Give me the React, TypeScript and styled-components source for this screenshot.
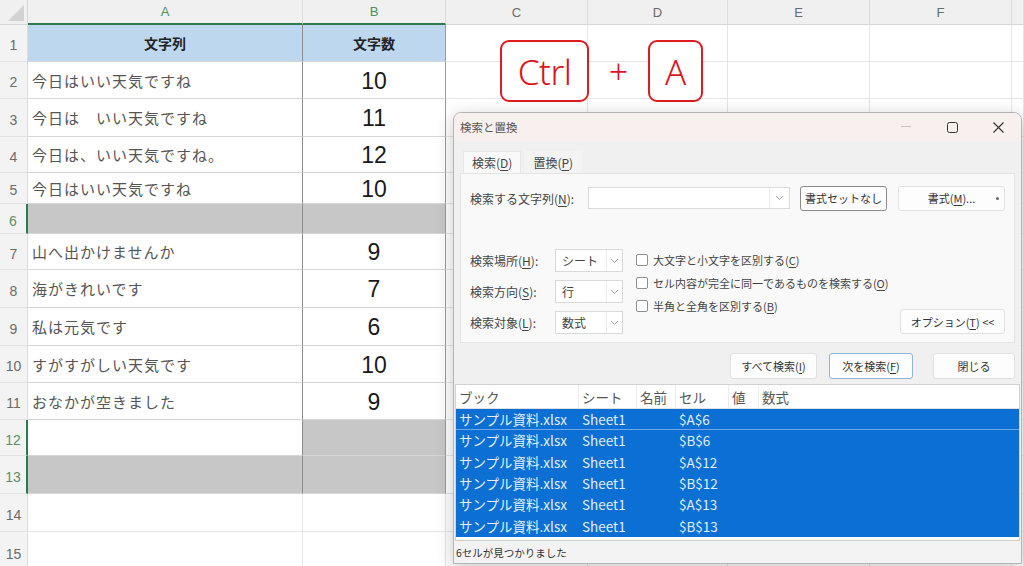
import React from "react";
import styled, { createGlobalStyle, css } from "styled-components";

const GlobalStyle = createGlobalStyle`
  html, body { margin: 0; padding: 0; background: #fff; }
  body {
    font-family: "Noto Sans CJK JP", "Noto Sans", sans-serif;
    overflow: hidden;
  }
  * { box-sizing: border-box; }
`;

const JP = `"Noto Sans CJK JP", "Noto Sans", sans-serif`;
const GREEN = "#2f7a4c";
const SEL_GREY = "#c7c7c7";

const Page = styled.div`
  position: relative;
  width: 1024px;
  height: 566px;
  overflow: hidden;
  background: #fff;
`;

/* ---------- spreadsheet ---------- */

const Sheet = styled.div`
  display: grid;
  grid-template-columns: 28px 275px 143px 142px 140px 142px 142px 12px;
  grid-template-rows: 25px 37px 37px 38px 36px 31px 30px 36px 38px 38px 37px 37px 36px 38px 38px 40px;
`;

const Corner = styled.div`
  position: relative;
  background: #f0f0f0;
  border-right: 1px solid #d6d6d6;
  border-bottom: 1px solid #d6d6d6;
  &::after {
    content: "";
    position: absolute;
    right: 3px;
    bottom: 3px;
    width: 16px;
    height: 16px;
    background: #d2d2d2;
    clip-path: polygon(100% 0, 100% 100%, 0 100%);
  }
`;

const ColHead = styled.div<{ $selected?: boolean }>`
  display: flex;
  align-items: center;
  justify-content: center;
  background: #f0f0f0;
  border-right: 1px solid #dcdcdc;
  border-bottom: ${(p) => (p.$selected ? `2px solid ${GREEN}` : "1px solid #d6d6d6")};
  font-family: "Liberation Sans", Arial, sans-serif;
  font-size: 13px;
  color: ${(p) => (p.$selected ? "#4f8c64" : "#6a6a6a")};
`;

const RowHead = styled.div<{ $selected?: boolean }>`
  display: flex;
  align-items: center;
  justify-content: center;
  padding-top: 4px;
  background: #f3f3f3;
  border-right: ${(p) => (p.$selected ? `2px solid ${GREEN}` : "1px solid #dcdcdc")};
  border-bottom: 1px solid #e2e2e2;
  font-family: "Liberation Sans", Arial, sans-serif;
  font-size: 14px;
  color: ${(p) => (p.$selected ? "#5b8e6c" : "#6b6b6b")};
`;

type CellKind = "head" | "text" | "num" | "blank";

const Cell = styled.div<{
  $kind: CellKind;
  $bg?: string;
  $right?: string;
  $bottom?: string;
}>`
  display: flex;
  align-items: center;
  overflow: hidden;
  white-space: nowrap;
  background: ${(p) => p.$bg || "#fff"};
  border-right: 1px solid ${(p) => p.$right || "#e6e6e6"};
  border-bottom: 1px solid ${(p) => p.$bottom || "#e6e6e6"};
  ${(p) =>
    p.$kind === "head" &&
    css`
      justify-content: center;
      font-family: ${JP};
      font-weight: 700;
      font-size: 14px;
      color: #222;
    `}
  ${(p) =>
    p.$kind === "text" &&
    css`
      padding-left: 4px;
      font-family: ${JP};
      font-size: 15px;
      letter-spacing: 1px;
      color: #555;
    `}
  ${(p) =>
    p.$kind === "num" &&
    css`
      justify-content: center;
      padding-top: 2px;
      font-family: "Liberation Sans", Arial, sans-serif;
      font-size: 23px;
      color: #1a1a1a;
    `}
`;

type SheetRow = {
  n: number;
  a?: string;
  b?: string;
  head?: boolean;
  selA?: boolean;
  selB?: boolean;
  rowSel?: boolean;
  outside?: boolean;
};

const sheetRows: SheetRow[] = [
  { n: 1, a: "文字列", b: "文字数", head: true },
  { n: 2, a: "今日はいい天気ですね", b: "10" },
  { n: 3, a: "今日は　いい天気ですね", b: "11" },
  { n: 4, a: "今日は、いい天気ですね。", b: "12" },
  { n: 5, a: "今日はいい天気ですね", b: "10" },
  { n: 6, selA: true, selB: true, rowSel: true },
  { n: 7, a: "山へ出かけませんか", b: "9" },
  { n: 8, a: "海がきれいです", b: "7" },
  { n: 9, a: "私は元気です", b: "6" },
  { n: 10, a: "すがすがしい天気です", b: "10" },
  { n: 11, a: "おなかが空きました", b: "9" },
  { n: 12, selB: true, rowSel: true },
  { n: 13, selA: true, selB: true, rowSel: true },
  { n: 14, outside: true },
  { n: 15, outside: true },
];

const columns = ["A", "B", "C", "D", "E", "F", ""];

function SheetView() {
  return (
    <Sheet>
      <Corner />
      {columns.map((c, i) => (
        <ColHead key={i} $selected={i < 2}>
          {c}
        </ColHead>
      ))}
      {sheetRows.map((r) => {
        const tableBottom = r.outside ? "#e6e6e6" : "#d6d6d6";
        const aBg = r.head ? "#bdd7ee" : r.selA ? SEL_GREY : "#fff";
        const bBg = r.head ? "#bdd7ee" : r.selB ? SEL_GREY : "#fff";
        return (
          <React.Fragment key={r.n}>
            <RowHead $selected={r.rowSel}>{r.n}</RowHead>
            <Cell
              $kind={r.head ? "head" : r.a ? "text" : "blank"}
              $bg={aBg}
              $right={r.outside ? "#e6e6e6" : "#8c8c8c"}
              $bottom={tableBottom}
            >
              {r.a}
            </Cell>
            <Cell
              $kind={r.head ? "head" : r.b ? "num" : "blank"}
              $bg={bBg}
              $right={r.outside ? "#e6e6e6" : "#9a9a9a"}
              $bottom={tableBottom}
            >
              {r.b}
            </Cell>
            {[0, 1, 2, 3, 4].map((k) => (
              <Cell key={k} $kind="blank" />
            ))}
          </React.Fragment>
        );
      })}
    </Sheet>
  );
}

/* ---------- shortcut keys ---------- */

const Keys = styled.div`
  position: absolute;
  left: 500px;
  top: 40px;
  display: flex;
  align-items: center;
`;

const Key = styled.div<{ $w: number }>`
  width: ${(p) => p.$w}px;
  height: 62px;
  display: flex;
  align-items: center;
  justify-content: center;
  background: #fff;
  border: 2px solid #dd1c22;
  border-radius: 9px;
  font-family: "Noto Sans", "Liberation Sans", sans-serif;
  font-weight: 300;
  font-size: 35px;
  letter-spacing: -0.5px;
  color: #d9161d;
`;

const Plus = styled.div`
  width: 59px;
  text-align: center;
  font-family: "Noto Sans", sans-serif;
  font-weight: 300;
  font-size: 34px;
  color: #d9161d;
`;

/* ---------- dialog ---------- */

const Dialog = styled.div`
  position: absolute;
  left: 453px;
  top: 112px;
  width: 569px;
  height: 452px;
  display: flex;
  flex-direction: column;
  background: #f0f0f0;
  border: 1px solid #b4b4b4;
  border-radius: 8px 8px 0 0;
  box-shadow: 0 4px 18px rgba(0, 0, 0, 0.22);
  overflow: hidden;
  font-family: ${JP};
  color: #333;
`;

const TitleBar = styled.div`
  height: 28px;
  flex: none;
  display: flex;
  align-items: center;
  padding-left: 6px;
  background: #f8f0ee;
  font-size: 11.5px;
  color: #555;
`;

const TitleControls = styled.div`
  margin-left: auto;
  display: flex;
  height: 100%;
`;

const TitleButton = styled.div`
  width: 46px;
  height: 100%;
  display: flex;
  align-items: center;
  justify-content: center;
`;

const Section = styled.div`
  padding: 10px 6px 0;
  flex: none;
`;

const Tabs = styled.div`
  display: flex;
  gap: 3px;
  margin-left: 3px;
`;

const Tab = styled.div<{ $active?: boolean }>`
  height: 22px;
  padding: 0 8px;
  display: flex;
  align-items: center;
  font-size: 12px;
  color: #444;
  background: ${(p) => (p.$active ? "#f9f9f9" : "#f3f3f3")};
  border: 1px solid ${(p) => (p.$active ? "#e6e6e6" : "transparent")};
  border-bottom: none;
`;

const Panel = styled.div`
  height: 170px;
  padding: 12px 9px 9px 9px;
  background: #f9f9f9;
  border: 1px solid #e4e4e4;
`;

const FindRow = styled.div`
  display: flex;
  align-items: center;
  height: 24px;
`;

const Label = styled.div<{ $w: number }>`
  width: ${(p) => p.$w}px;
  flex: none;
  font-size: 12px;
  color: #444;
  white-space: nowrap;
`;

const Combo = styled.div<{ $w: number; $h: number }>`
  width: ${(p) => p.$w}px;
  height: ${(p) => p.$h}px;
  flex: none;
  display: flex;
  align-items: center;
  background: #fff;
  border: 1px solid #d9d9d9;
  font-size: 12px;
  color: #444;
`;

const ComboText = styled.div`
  flex: 1;
  padding-left: 6px;
`;

const ComboArrow = styled.div<{ $w: number }>`
  width: ${(p) => p.$w}px;
  height: 100%;
  display: flex;
  align-items: center;
  justify-content: center;
  border-left: 1px solid #ececec;
`;

const Button = styled.div<{ $w: number; $h?: number; $tone?: "strong" | "focus" }>`
  width: ${(p) => p.$w}px;
  height: ${(p) => p.$h || 25}px;
  flex: none;
  position: relative;
  display: flex;
  align-items: center;
  justify-content: center;
  background: #fdfdfd;
  border: 1px solid
    ${(p) => (p.$tone === "strong" ? "#8a8a8a" : p.$tone === "focus" ? "#8fb4dc" : "#e1e1e1")};
  border-radius: 3px;
  font-size: 11px;
  color: #333;
  white-space: nowrap;
`;

const Mnemonic = styled.span`
  text-decoration: underline;
  text-underline-offset: 2px;
`;

const MenuDot = styled.span`
  position: absolute;
  right: 5px;
  top: 10px;
  width: 3px;
  height: 3px;
  background: #666;
  border-radius: 50%;
`;

const Options = styled.div`
  display: flex;
  align-items: flex-start;
  margin-top: 39px;
`;

const SelectGrid = styled.div`
  display: grid;
  grid-template-columns: 85px 68px;
  row-gap: 8px;
  align-items: center;
`;

const CheckList = styled.div`
  display: flex;
  flex-direction: column;
  gap: 8px;
  margin-left: 13px;
  padding-top: 3px;
`;

const CheckRow = styled.div`
  display: flex;
  align-items: center;
  gap: 5px;
  height: 15px;
  font-size: 11px;
  color: #444;
  white-space: nowrap;
`;

const CheckBox = styled.span`
  width: 12px;
  height: 12px;
  background: #fff;
  border: 1px solid #8f8f8f;
  border-radius: 2px;
`;

const OptionSlot = styled.div`
  margin-left: auto;
  align-self: flex-end;
`;

const ButtonRow = styled.div`
  display: flex;
  justify-content: flex-end;
  gap: 12px;
  margin-top: 10px;
  padding-right: 6px;
  flex: none;
`;

const Spacer = styled.div`
  width: 8px;
`;

const ResultList = styled.div`
  margin: 5px 1px 0;
  height: 157px;
  flex: none;
  display: flex;
  flex-direction: column;
  background: #fff;
  border: 1px solid #d2d2d2;
`;

const ListGrid = css`
  display: grid;
  grid-template-columns: 123px 58px 39px 53px 30px 1fr;
  align-items: center;
`;

const ListHeader = styled.div`
  ${ListGrid};
  height: 24px;
  font-size: 13.5px;
  color: #555;
  border-bottom: 1px solid #e0e0e0;
`;

const HeadCell = styled.div`
  height: 100%;
  display: flex;
  align-items: center;
  padding-left: 3px;
  border-right: 1px solid #ececec;
  &:last-child {
    border-right: none;
  }
`;

const ListRow = styled.div<{ $focus?: boolean }>`
  ${ListGrid};
  height: 21.3px;
  background: #0b6fd3;
  color: #e4eefc;
  font-size: 13.5px;
  border-bottom: 1px solid ${(p) => (p.$focus ? "#6fa6e6" : "#0b6fd3")};
`;

const RowCell = styled.div`
  padding-left: 3px;
  white-space: nowrap;
  overflow: hidden;
`;

const StatusBar = styled.div`
  flex: 1;
  display: flex;
  align-items: center;
  padding-left: 2px;
  font-size: 10.5px;
  color: #333;
  background: #f3f3f3;
`;

const Chevron = () => (
  <svg width="9" height="6" viewBox="0 0 9 6">
    <path d="M1 1 L4.5 4.5 L8 1" fill="none" stroke="#a0a0a0" strokeWidth="1" />
  </svg>
);

const results = [
  { cell: "$A$6" },
  { cell: "$B$6" },
  { cell: "$A$12" },
  { cell: "$B$12" },
  { cell: "$A$13" },
  { cell: "$B$13" },
];

const selects = [
  { label: "検索場所", key: "H", value: "シート" },
  { label: "検索方向", key: "S", value: "行" },
  { label: "検索対象", key: "L", value: "数式" },
];

const checks = [
  { label: "大文字と小文字を区別する", key: "C" },
  { label: "セル内容が完全に同一であるものを検索する", key: "O" },
  { label: "半角と全角を区別する", key: "B" },
];

function FindDialog() {
  return (
    <Dialog>
      <TitleBar>
        検索と置換
        <TitleControls>
          <TitleButton>
            <svg width="10" height="2" viewBox="0 0 10 2">
              <rect width="10" height="1" fill="#c4c4c4" />
            </svg>
          </TitleButton>
          <TitleButton>
            <svg width="11" height="11" viewBox="0 0 11 11">
              <rect x="0.5" y="0.5" width="10" height="10" rx="2" fill="none" stroke="#333" />
            </svg>
          </TitleButton>
          <TitleButton>
            <svg width="11" height="11" viewBox="0 0 11 11">
              <path d="M0.5 0.5 L10.5 10.5 M10.5 0.5 L0.5 10.5" stroke="#333" strokeWidth="1.1" />
            </svg>
          </TitleButton>
        </TitleControls>
      </TitleBar>

      <Section>
        <Tabs>
          <Tab $active>
            検索(<Mnemonic>D</Mnemonic>)
          </Tab>
          <Tab>
            置換(<Mnemonic>P</Mnemonic>)
          </Tab>
        </Tabs>
        <Panel>
          <FindRow>
            <Label $w={118}>
              検索する文字列(<Mnemonic>N</Mnemonic>):
            </Label>
            <Combo $w={202} $h={22}>
              <ComboText />
              <ComboArrow $w={20}>
                <Chevron />
              </ComboArrow>
            </Combo>
            <Button $w={87} $tone="strong" style={{ marginLeft: 10 }}>
              書式セットなし
            </Button>
            <Button $w={107} style={{ marginLeft: 11 }}>
              書式(<Mnemonic>M</Mnemonic>)...
              <MenuDot />
            </Button>
          </FindRow>

          <Options>
            <SelectGrid>
              {selects.map((s) => (
                <React.Fragment key={s.key}>
                  <Label $w={85}>
                    {s.label}(<Mnemonic>{s.key}</Mnemonic>):
                  </Label>
                  <Combo $w={68} $h={23}>
                    <ComboText>{s.value}</ComboText>
                    <ComboArrow $w={16}>
                      <Chevron />
                    </ComboArrow>
                  </Combo>
                </React.Fragment>
              ))}
            </SelectGrid>
            <CheckList>
              {checks.map((c) => (
                <CheckRow key={c.key}>
                  <CheckBox />
                  <span>
                    {c.label}(<Mnemonic>{c.key}</Mnemonic>)
                  </span>
                </CheckRow>
              ))}
            </CheckList>
            <OptionSlot>
              <Button $w={105} $h={25}>
                オプション(<Mnemonic>T</Mnemonic>) &lt;&lt;
              </Button>
            </OptionSlot>
          </Options>
        </Panel>
      </Section>

      <ButtonRow>
        <Button $w={87} $h={26}>
          すべて検索(<Mnemonic>I</Mnemonic>)
        </Button>
        <Button $w={84} $h={26} $tone="focus">
          次を検索(<Mnemonic>F</Mnemonic>)
        </Button>
        <Spacer />
        <Button $w={82} $h={26} style={{ marginLeft: -12 }}>
          閉じる
        </Button>
      </ButtonRow>

      <ResultList>
        <ListHeader>
          <HeadCell>ブック</HeadCell>
          <HeadCell>シート</HeadCell>
          <HeadCell>名前</HeadCell>
          <HeadCell>セル</HeadCell>
          <HeadCell>値</HeadCell>
          <HeadCell>数式</HeadCell>
        </ListHeader>
        {results.map((r, i) => (
          <ListRow key={r.cell} $focus={i === 0}>
            <RowCell>サンプル資料.xlsx</RowCell>
            <RowCell>Sheet1</RowCell>
            <RowCell />
            <RowCell>{r.cell}</RowCell>
            <RowCell />
            <RowCell />
          </ListRow>
        ))}
      </ResultList>

      <StatusBar>6セルが見つかりました</StatusBar>
    </Dialog>
  );
}

export default function App() {
  return (
    <Page>
      <GlobalStyle />
      <SheetView />
      <Keys>
        <Key $w={89}>Ctrl</Key>
        <Plus>+</Plus>
        <Key $w={55}>A</Key>
      </Keys>
      <FindDialog />
    </Page>
  );
}
